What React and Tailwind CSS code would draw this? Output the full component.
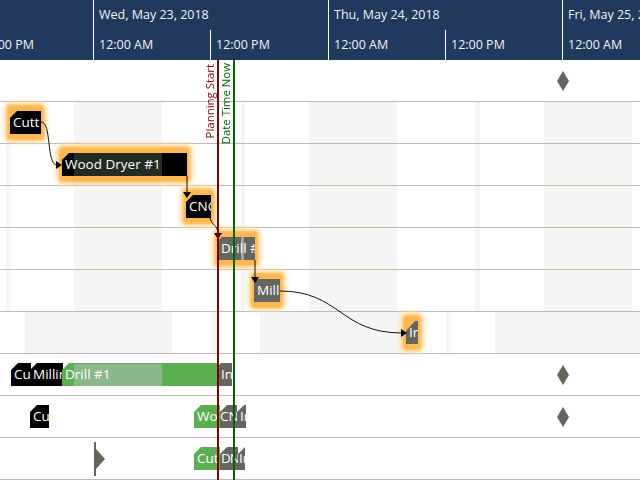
function Glow({ className, children }) {
  return (
    <div className={`absolute h-[23px] ${className}`}>
      <div className="absolute -inset-x-[3px] -inset-y-[6px] rounded-[4px] bg-[#fbb850] shadow-[0_0_4px_3px_#fddb9e] blur-[1px]" />
      <div className="relative">{children}</div>
    </div>
  );
}

function Bar({ className = "pl-[3px]", chamfer = "[clip-path:polygon(7px_0,100%_0,100%_100%,0_100%,0_7px)]", overlay, children, color = "bg-black" }) {
  return (
    <div className={`relative h-[23px] overflow-hidden whitespace-nowrap text-[13.5px] leading-[22px] text-white ${chamfer} ${color} ${className}`}>
      {overlay}
      <span className="relative">{children}</span>
    </div>
  );
}

function Diamond({ className }) {
  return (
    <svg className={`absolute h-[20px] w-[12px] ${className}`} viewBox="0 0 12 20">
      <polygon points="6,0 12,10 6,20 0,10" fill="#66665e" />
    </svg>
  );
}

function Band({ className }) {
  return <div className={`absolute inset-y-0 bg-[#f5f5f5] ${className}`} />;
}

function ShiftBands() {
  return (
    <>
      <Band className="left-[6px] w-[4px] border-r border-[#faf3e3]" />
      <Band className="left-[74px] w-[88px] border-y border-[#faf3e3]" />
      <Band className="left-[241px] w-[4px] border-l border-[#faf3e3]" />
      <Band className="left-[309px] w-[88px] border-y border-[#faf3e3]" />
      <Band className="left-[475px] w-[5px] border-r border-[#faf3e3]" />
      <Band className="left-[544px] w-[88px] border-y border-[#faf3e3]" />
    </>
  );
}

function Row({ children }) {
  return <div className="relative h-[42px] border-b border-[#bbbbbb]">{children}</div>;
}

function HeaderTop({ className, children }) {
  return (
    <div className={`flex h-full shrink-0 items-center border-r border-white pl-[5px] ${className}`}>
      {children}
    </div>
  );
}

export default function App() {
  return (
    <div className="relative h-[480px] w-[640px] overflow-hidden bg-white font-['Open_Sans','Noto_Sans',sans-serif]">
      <header className="h-[60px] overflow-hidden bg-[#20395c] text-[12.5px] text-[#f2f2f2]">
        <div className="flex h-[30px]">
          <div className="h-full w-[94px] shrink-0 border-r border-white" />
          <HeaderTop className="w-[235px]">Wed, May 23, 2018</HeaderTop>
          <HeaderTop className="w-[234px]">Thu, May 24, 2018</HeaderTop>
          <div className="flex items-center whitespace-nowrap pl-[5px]">Fri, May 25, 2018</div>
        </div>
        <div className="flex h-[30px] whitespace-nowrap">
          <div className="flex h-full w-[94px] shrink-0 items-center justify-end overflow-hidden border-r border-white pr-[59px]">12:00 PM</div>
          <div className="flex h-full w-[117px] shrink-0 items-center border-r border-white pl-[5px]">12:00 AM</div>
          <div className="flex h-full w-[118px] shrink-0 items-center border-r border-white pl-[5px]">12:00 PM</div>
          <div className="flex h-full w-[117px] shrink-0 items-center border-r border-white pl-[5px]">12:00 AM</div>
          <div className="flex h-full w-[117px] shrink-0 items-center border-r border-white pl-[5px]">12:00 PM</div>
          <div className="flex h-full items-center pl-[5px]">12:00 AM</div>
        </div>
      </header>

      <main>
        <Row>
          <Diamond className="left-[557px] top-[11px]" />
        </Row>
        <Row>
          <ShiftBands />
          <Glow className="left-[10px] top-[9px] w-[31px]"><Bar>Cutt</Bar></Glow>
        </Row>
        <Row>
          <ShiftBands />
          <Glow className="left-[62px] top-[9px] w-[125px]">
            <Bar overlay={<div className="absolute left-[12px] top-0 h-[23px] w-[88px] bg-[#222c22]" />}>Wood Dryer #1</Bar>
          </Glow>
        </Row>
        <Row>
          <ShiftBands />
          <Glow className="left-[186px] top-[9px] w-[25px]"><Bar>CNC</Bar></Glow>
        </Row>
        <Row>
          <ShiftBands />
          <Glow className="left-[218px] top-[9px] w-[37px]">
            <Bar color="bg-[#66665e]" chamfer="[clip-path:polygon(4px_0,100%_0,100%_100%,0_100%,0_4px)]" overlay={<div className="absolute left-[23px] top-0 h-[23px] w-[3px] bg-[#a3a3a0]" />}>Drill #1</Bar>
          </Glow>
        </Row>
        <Row>
          <ShiftBands />
          <Glow className="left-[254px] top-[9px] w-[26px]"><Bar color="bg-[#66665e]" chamfer="[clip-path:polygon(3px_0,100%_0,100%_100%,0_100%,0_3px)]">Mill</Bar></Glow>
        </Row>
        <Row>
          <Band className="left-[25px] w-[147px] border-l border-[#faf3e3]" />
          <Band className="left-[211px] w-[9px]" />
          <Band className="left-[260px] w-[142px]" />
          <Band className="left-[446px] w-[4px] border-r border-[#faf3e3]" />
          <Band className="left-[495px] w-[145px]" />
          <Glow className="left-[406px] top-[9px] w-[12px]"><Bar color="bg-[#66665e]" chamfer="[clip-path:polygon(9px_0,100%_0,100%_100%,0_100%,0_10px)]">Ir</Bar></Glow>
        </Row>
        <Row>
          <div className="absolute left-[11px] top-[9px] w-[20px]"><Bar>Cu</Bar></div>
          <div className="absolute left-[30px] top-[9px] w-[33px]"><Bar>Millin</Bar></div>
          <div className="absolute left-[62px] top-[9px] w-[156px]">
            <Bar color="bg-[#5bae52]" overlay={<div className="absolute left-[12px] top-[1px] h-[22px] w-[88px] bg-[#8cb78c]" />}>Drill #1</Bar>
          </div>
          <div className="absolute left-[218px] top-[9px] w-[14px]"><Bar color="bg-[#66665e]" chamfer="[clip-path:polygon(3px_0,100%_0,100%_100%,0_100%,0_3px)]">In</Bar></div>
          <Diamond className="left-[557px] top-[11px]" />
        </Row>
        <Row>
          <div className="absolute left-[30px] top-[9px] w-[19px]"><Bar>Cu</Bar></div>
          <div className="absolute left-[194px] top-[9px] w-[26px]"><Bar color="bg-[#5bae52]">Wo</Bar></div>
          <div className="absolute left-[220px] top-[9px] w-[17px]"><Bar color="bg-[#66665e]" className="pl-0">CN</Bar></div>
          <div className="absolute left-[237px] top-[9px] w-[9px]"><Bar color="bg-[#66665e]">Ir</Bar></div>
          <Diamond className="left-[557px] top-[11px]" />
        </Row>
        <Row>
          <svg className="absolute left-[94px] top-[4px] h-[34px] w-[12px]" viewBox="0 0 12 34">
            <rect x="0" y="0" width="2" height="34" fill="#66665e" />
            <polygon points="2,7 11,17 2,27" fill="#66665e" />
          </svg>
          <div className="absolute left-[194px] top-[9px] w-[26px]"><Bar color="bg-[#5bae52]">Cut</Bar></div>
          <div className="absolute left-[220px] top-[9px] w-[18px]"><Bar color="bg-[#66665e]" className="pl-[1px] tracking-[-1px]">DN</Bar></div>
          <div className="absolute left-[238px] top-[9px] w-[7px]"><Bar color="bg-[#66665e]" className="pl-[1px]">Ir</Bar></div>
        </Row>
      </main>

      <svg className="pointer-events-none absolute left-0 top-0 h-[480px] w-[640px]" viewBox="0 0 640 480" fill="none">
        <path d="M41 122 C52 122 46 165 57 165" stroke="#111" strokeWidth="1" />
        <polygon points="56,161 62,165 56,169" fill="#000" />
        <path d="M187 176 V193" stroke="#111" strokeWidth="1" />
        <polygon points="183,192 191,192 187,198" fill="#000" />
        <path d="M210 218 C212 226 217 224 218 233" stroke="#111" strokeWidth="1" />
        <polygon points="214,233 222,233 218,239" fill="#000" />
        <path d="M255 260 V277" stroke="#111" strokeWidth="1" />
        <polygon points="251,277 259,277 255,283" fill="#000" />
        <path d="M280 291 C340 291 340 333 402 333" stroke="#111" strokeWidth="1" />
        <polygon points="401,329 407,333 401,337" fill="#000" />
      </svg>

      <div className="absolute bottom-0 left-[217px] top-[60px] w-[2px] bg-[#800000]" />
      <div className="absolute bottom-0 left-[233px] top-[60px] w-[2px] bg-[#006400]" />
      <div className="absolute left-[203px] top-[64px] whitespace-nowrap text-[11.4px] leading-[13px] text-[#800000] [transform:rotate(180deg)] [writing-mode:vertical-rl]">Planning Start</div>
      <div className="absolute left-[219px] top-[63px] whitespace-nowrap text-[11.4px] leading-[13px] text-[#006400] [transform:rotate(180deg)] [writing-mode:vertical-rl]">Date Time Now</div>
    </div>
  );
}
